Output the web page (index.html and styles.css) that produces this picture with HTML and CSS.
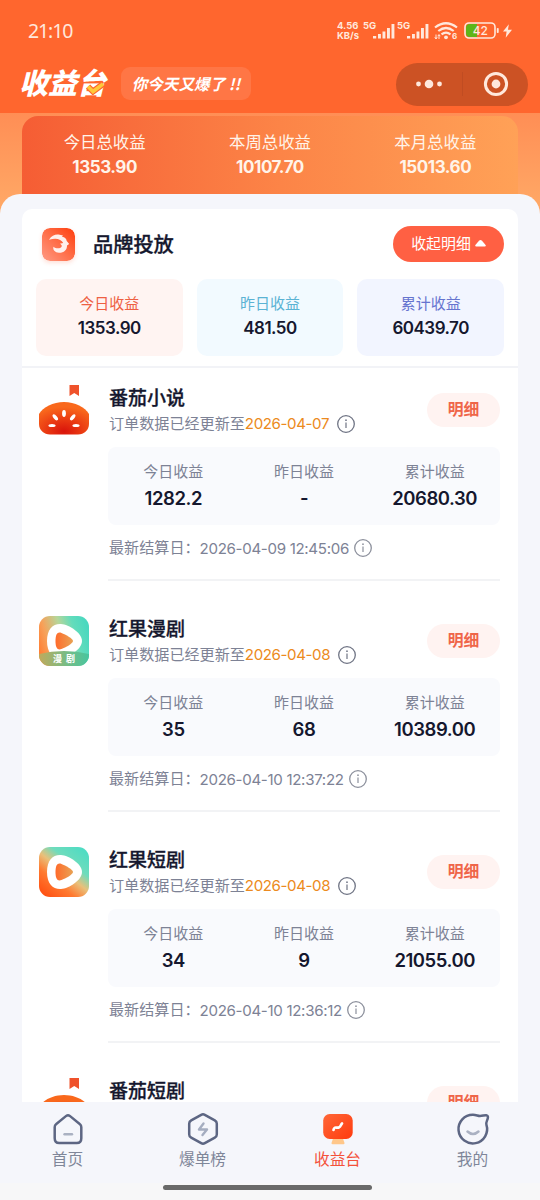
FILE: index.html
```html
<!DOCTYPE html>
<html lang="zh-CN">
<head>
<meta charset="utf-8">
<title>收益台</title>
<link rel="stylesheet" href="styles.css">
</head>
<body>
<svg class="defs" width="0" height="0" aria-hidden="true">
  <defs>
    <linearGradient id="fruit" x1=".1" y1="1" x2=".9" y2="0">
      <stop offset="0" stop-color="#ff4d10"/><stop offset=".3" stop-color="#ff7a30"/><stop offset=".5" stop-color="#e9c07a"/><stop offset=".68" stop-color="#6fdcbc"/><stop offset="1" stop-color="#4bdcc4"/>
    </linearGradient>
    <linearGradient id="comic" x1="0" y1=".65" x2="1" y2=".35">
      <stop offset="0" stop-color="#ff8136"/><stop offset=".2" stop-color="#f7a159"/><stop offset=".5" stop-color="#b6d69a"/><stop offset=".75" stop-color="#63dcbb"/><stop offset="1" stop-color="#4ad8bf"/>
    </linearGradient>
    <linearGradient id="play" x1="0" y1="0" x2="1" y2="0">
      <stop offset="0" stop-color="#ff6b2b"/><stop offset="1" stop-color="#e8a254"/>
    </linearGradient>
    <linearGradient id="band" x1="0" y1="0" x2="1" y2="0">
      <stop offset="0" stop-color="#bfaa5c"/><stop offset=".5" stop-color="#7dbb82"/><stop offset="1" stop-color="#48c59f"/>
    </linearGradient>
    <radialGradient id="tomato" cx=".5" cy=".9" r=".75">
      <stop offset="0" stop-color="#d9140b"/><stop offset=".45" stop-color="#e93812"/><stop offset="1" stop-color="#f9681c"/>
    </radialGradient>
    <linearGradient id="brand" x1="0" y1="1" x2="1" y2="0">
      <stop offset="0" stop-color="#ff9a84"/><stop offset=".55" stop-color="#ff6a43"/><stop offset="1" stop-color="#ff3d0c"/>
    </linearGradient>
    <linearGradient id="desk" x1="0" y1="0" x2="1" y2="1">
      <stop offset="0" stop-color="#ff6738"/><stop offset="1" stop-color="#ff3b0e"/>
    </linearGradient>
    <clipPath id="tile"><rect width="50" height="50" rx="11"/></clipPath>
    <symbol id="i-tomato" viewBox="0 0 50 50">
      <path d="M30.500 0h9.500v11l-4.750-3-4.750 3z" fill="#ef522b"/>
      <path d="M0 29C4 22 14 17 25 17s21 5 25 12v10c0 6-5 10.500-11 10.500H11C5 49.500 0 45 0 39z" fill="url(#tomato)"/>
      <g fill="#fff"><ellipse cx="25" cy="28.500" rx="1.900" ry="3.400"/><ellipse cx="16.300" cy="32.300" rx="1.800" ry="3.600" transform="rotate(-40 16.300 32.300)"/><ellipse cx="33.700" cy="32.300" rx="1.800" ry="3.600" transform="rotate(40 33.700 32.300)"/><ellipse cx="13" cy="40.500" rx="3.600" ry="1.600"/><ellipse cx="37" cy="40.500" rx="3.600" ry="1.600"/></g>
    </symbol>
    <symbol id="i-fruit" viewBox="0 0 50 50">
      <rect width="50" height="50" rx="11" fill="url(#fruit)"/>
      <path d="M8 25C8 13 14 7.500 22 8c8 .5 21 9 21 17s-13 16.500-21 17C14 42.500 8 37 8 25z" fill="#fff"/>
      <path d="M16.500 25c0-7 2-9.500 6-8 4 1.500 11.500 5.500 11.500 8s-7.500 6.500-11.500 8c-4 1.500-6-1-6-8z" fill="url(#play)"/>
    </symbol>
    <symbol id="i-comic" viewBox="0 0 50 50">
      <g clip-path="url(#tile)">
        <rect width="50" height="50" fill="url(#comic)"/>
        <path d="M8 25C8 13 14 7.500 22 8c8 .5 21 9 21 17s-13 16.500-21 17C14 42.500 8 37 8 25z" fill="#fff"/>
        <path d="M16.500 25c0-7 2-9.500 6-8 4 1.500 11.500 5.500 11.500 8s-7.500 6.500-11.500 8c-4 1.500-6-1-6-8z" fill="url(#play)"/>
        <path d="M0 38q25-6 50 0v12H0z" fill="url(#band)"/>
      </g>
    </symbol>
    <symbol id="i-info" viewBox="0 0 18 18">
      <circle cx="9" cy="9" r="8.300" fill="none" stroke="currentColor" stroke-width="1.300"/>
      <path d="M9 7.500v5.500" stroke="currentColor" stroke-width="1.200"/><circle cx="9" cy="5.200" r=".85" fill="currentColor"/>
    </symbol>
    <symbol id="i-signal" viewBox="0 0 23 15">
      <path d="M1 12h3.200v2.500H1zM6 10h2.900v4.500H6zM10.500 7.500h2.900v7h-2.900zM15 4h2.900v10.500H15zM19.500 0h2.900v14.500h-2.900z" fill="currentColor"/>
    </symbol>
  </defs>
</svg>
<main class="screen">
  <header class="header">
    <div class="status">
      <span class="clock">21:10</span>
      <div class="indicators">
        <div class="speed"><span>4.56</span><span>KB/s</span></div>
        <span class="cell"><b>5G</b><svg width="23" height="15"><use href="#i-signal"/></svg></span>
        <span class="cell"><b>5G</b><svg width="23" height="15"><use href="#i-signal"/></svg></span>
        <svg class="wifi" width="24" height="18" viewBox="0 0 24 18">
          <g fill="none" stroke="currentColor" stroke-width="2.200"><path d="M1 5.500q11-8.500 22 0"/><path d="M4.300 9q7.700-6 15.400 0"/><path d="M7.500 12.400q4.500-3.600 9 0"/></g>
          <circle cx="12" cy="15.300" r="1.900" fill="currentColor"/><path d="M2 12.500v4M.8 15.200 2 17l1.200-1.800M5 17v-4M3.800 14.200 5 12.500l1.200 1.700" stroke="currentColor" fill="none"/>
          <text x="18" y="17.300" class="wifi-gen">6</text>
        </svg>
        <svg class="battery" width="36" height="17" viewBox="0 0 36 17">
          <path d="M6 2h7v13H6a4 4 0 0 1-4-4V6a4 4 0 0 1 4-4z" fill="#5eb519"/>
          <rect x="1" y="1" width="30" height="15" rx="4" fill="none" stroke="currentColor" stroke-width="1.600"/>
          <rect x="32.800" y="6" width="1.900" height="5" rx=".8" fill="currentColor"/>
          <text x="16.300" y="12.800" text-anchor="middle" class="battery-num">42</text>
        </svg>
        <svg class="bolt" width="9" height="14" viewBox="0 0 10 15"><path d="M6.500 0 0 8h4L3 15l7-9H5.500z" fill="currentColor"/></svg>
      </div>
    </div>
    <div class="titlebar">
      <h1 class="logo">收益台<svg class="check" width="19" height="14" viewBox="0 0 19 14"><path d="m2 5.500 5 5L17 3" fill="none" stroke="#ff662e" stroke-width="6"/><path d="m2 5.500 5 5L17 3" fill="none" stroke="#ffc93a" stroke-width="3.600"/></svg></h1>
      <span class="slogan">你今天又爆了 !!</span>
      <div class="capsule">
        <svg width="28" height="12" viewBox="0 0 28 12"><g fill="currentColor"><circle cx="3.500" cy="6" r="2.400"/><circle cx="14" cy="6" r="4.300"/><circle cx="24.500" cy="6" r="2.400"/></g></svg>
        <i></i>
        <svg width="26" height="26" viewBox="0 0 26 26"><circle cx="13" cy="13" r="10.600" fill="none" stroke="currentColor" stroke-width="3"/><circle cx="13" cy="13" r="4.400" fill="currentColor"/></svg>
      </div>
    </div>
  </header>

  <section class="hero">
    <div class="totals">
      <div><span>今日总收益</span><b>1353.90</b></div>
      <div><span>本周总收益</span><b>10107.70</b></div>
      <div><span>本月总收益</span><b>15013.60</b></div>
    </div>
  </section>

  <section class="sheet">
    <div class="card">
      <div class="card-head">
        <svg class="brand" width="33" height="33" viewBox="0 0 33 33"><rect width="33" height="33" rx="8" fill="url(#brand)"/><path d="M7 11.800C9.500 7.500 13 6.200 16.500 6.500l4.500 1-1 1.300c3 .5 4.500 2 4.700 4.200l2.500 3-2.200 1.500c.3 4.500-3.500 7.500-8 7.300-4-.2-6.500-3-5.500-6 1.800 1.700 5 2 7 1 2.300-1.300 1.200-3.500-.8-4l3.500-.8c-2-3.800-7-5.700-14.200-3.200z" fill="#fff" opacity=".9"/></svg>
        <h2>品牌投放</h2>
        <button class="collapse">收起明细<svg width="11" height="7" viewBox="0 0 11 7"><path d="M5.500 0Q6.300 0 7 .7L10.600 5q.7 1.500-.8 1.500H1.200Q-.3 6.500.4 5L4 .7Q4.700 0 5.500 0z" fill="#fff"/></svg></button>
      </div>
      <div class="tiles">
        <div class="tile red"><span>今日收益</span><b>1353.90</b></div>
        <div class="tile cyan"><span>昨日收益</span><b>481.50</b></div>
        <div class="tile blue"><span>累计收益</span><b>60439.70</b></div>
      </div>

      <article class="item">
        <svg class="app" width="50" height="50"><use href="#i-tomato"/></svg>
        <div class="body">
          <div class="top"><div><h3>番茄小说</h3><p class="update">订单数据已经更新至<em>2026-04-07</em><svg width="18" height="18"><use href="#i-info"/></svg></p></div><button class="detail">明细</button></div>
          <div class="stats"><div><span>今日收益</span><b>1282.2</b></div><div><span>昨日收益</span><b>-</b></div><div><span>累计收益</span><b>20680.30</b></div></div>
          <p class="settle">最新结算日：<time>2026-04-09 12:45:06</time><svg width="18" height="18"><use href="#i-info"/></svg></p>
        </div>
      </article>

      <article class="item">
        <div class="app"><svg width="50" height="50"><use href="#i-comic"/></svg><span class="app-label">漫 剧</span></div>
        <div class="body">
          <div class="top"><div><h3>红果漫剧</h3><p class="update">订单数据已经更新至<em>2026-04-08</em><svg width="18" height="18"><use href="#i-info"/></svg></p></div><button class="detail">明细</button></div>
          <div class="stats"><div><span>今日收益</span><b>35</b></div><div><span>昨日收益</span><b>68</b></div><div><span>累计收益</span><b>10389.00</b></div></div>
          <p class="settle">最新结算日：<time>2026-04-10 12:37:22</time><svg width="18" height="18"><use href="#i-info"/></svg></p>
        </div>
      </article>

      <article class="item">
        <svg class="app" width="50" height="50"><use href="#i-fruit"/></svg>
        <div class="body">
          <div class="top"><div><h3>红果短剧</h3><p class="update">订单数据已经更新至<em>2026-04-08</em><svg width="18" height="18"><use href="#i-info"/></svg></p></div><button class="detail">明细</button></div>
          <div class="stats"><div><span>今日收益</span><b>34</b></div><div><span>昨日收益</span><b>9</b></div><div><span>累计收益</span><b>21055.00</b></div></div>
          <p class="settle">最新结算日：<time>2026-04-10 12:36:12</time><svg width="18" height="18"><use href="#i-info"/></svg></p>
        </div>
      </article>

      <article class="item">
        <svg class="app" width="50" height="50"><use href="#i-tomato"/></svg>
        <div class="body">
          <div class="top"><div><h3>番茄短剧</h3></div><button class="detail">明细</button></div>
        </div>
      </article>
    </div>
  </section>

  <nav class="nav">
    <div class="tabs">
      <a><svg width="34" height="34" viewBox="0 0 34 34" fill="none"><path d="M5 12.200 15.200 3.900q1.800-1.300 3.600 0L29 12.200q1.300 1 1.300 3v11q0 4.800-4.500 4.800H8.200q-4.500 0-4.500-4.800v-11q0-2 1.300-3z" stroke="#5d6683" stroke-width="2.500"/><path d="M13.500 22.200h7.500" stroke="#aab1c2" stroke-width="2.400" stroke-linecap="round"/></svg><span>首页</span></a>
      <a><svg width="34" height="34" viewBox="0 0 34 34" fill="none"><path d="M15.200 2.800q1.800-1 3.600 0l10 5.500q2 1.100 2 3.200v11q0 2.100-2 3.200l-10 5.500q-1.800 1-3.600 0l-10-5.500q-2-1.100-2-3.200v-11q0-2.100 2-3.200z" stroke="#5d6683" stroke-width="2.500"/><path d="m17.500 11.500-4.500 6h8l-4.500 5.500" stroke="#a5adc0" stroke-width="2.400" stroke-linecap="round" stroke-linejoin="round"/></svg><span>爆单榜</span></a>
      <a class="active"><svg width="34" height="34" viewBox="0 0 34 34" fill="none"><path d="M12.500 25h9l2 6q.2 1.300-1.200 1.300H11.700q-1.400 0-1.200-1.300z" fill="#ffc78a"/><rect x="2.200" y="2" width="29.500" height="25" rx="6.500" fill="url(#desk)"/><path d="M12.500 18c1-4.500 3-1.500 5.300-2.500 2.200-1 2-3 3.200-4.100" stroke="#fff" stroke-width="2.700" stroke-linecap="round"/></svg><span>收益台</span></a>
      <a><svg width="34" height="34" viewBox="0 0 34 34" fill="none"><path d="M17 2.800C20 2.800 22 4 24 4c2.500 0 4.500-1 6.300-.8 1.700.2 1.900 1.800 1.400 3.500-.6 2-2 4-1.300 6A14.300 14.300 0 1 1 17 2.800z" stroke="#5d6683" stroke-width="2.500"/><path d="M11.500 19.500q5.500 5 11 0" stroke="#aab1c2" stroke-width="2.500" stroke-linecap="round"/></svg><span>我的</span></a>
    </div>
    <div class="gesture"><i></i></div>
  </nav>
</main>
</body>
</html>
```

FILE: styles.css
```css
* { box-sizing: border-box; }
body, h1, h2, h3, p { margin: 0; }
body {
  font-family: Inter, "Noto Sans CJK SC", sans-serif;
  color: #15172e;
}
svg { display: block; flex: none; }
.defs { position: absolute; }
button { border: 0; padding: 0; font-family: inherit; }
.screen {
  width: 540px;
  height: 1200px;
  overflow: hidden;
  display: flex;
  flex-direction: column;
  background: #f5f6fb;
}

/* header */
.header { height: 113px; flex: none; background: #ff662e; color: #ffe8dc; }
.status {
  height: 61px;
  display: flex;
  align-items: center;
  justify-content: space-between;
  padding: 0 28px;
}
.clock { font: 400 19.500px/24px "Noto Sans", sans-serif; letter-spacing: -1.1px; }
.indicators { display: flex; align-items: center; }
.speed { width: 25px; display: flex; flex-direction: column; font: 700 9.500px/9.500px Inter, sans-serif; white-space: nowrap; }
.cell { width: 34px; height: 17px; display: flex; align-items: flex-end; justify-content: flex-end; position: relative; }
.cell b { position: absolute; left: 1px; top: -1px; font: 700 9.500px/10px Inter, sans-serif; }
.cell svg { margin-right: 1px; }
.wifi { margin-left: 4px; }
.wifi-gen { font: 700 8px Inter, sans-serif; fill: currentColor; }
.battery { margin-left: 6px; }
.battery-num { font: 500 12px Inter, sans-serif; fill: currentColor; }
.bolt { margin-left: 3px; }
.titlebar { height: 44px; display: flex; align-items: center; padding: 0 12px 0 19px; }
.logo {
  position: relative;
  width: 88px;
  height: 40px;
  font: italic 900 29px/36px "Noto Sans CJK SC", sans-serif;
  color: #fff;
  white-space: nowrap;
}
.check { position: absolute; left: 67px; top: 18px; }
.slogan {
  width: 130px;
  height: 33px;
  margin-left: 14px;
  border-radius: 9px;
  background: #ff7645;
  color: #fff;
  text-align: center;
  font: italic 700 15.600px/32px "Noto Sans CJK SC", sans-serif;
  white-space: nowrap;
}
.capsule {
  width: 132px;
  height: 43px;
  margin-left: auto;
  margin-top: 2px;
  border-radius: 22px;
  background: #cc5224;
  display: flex;
  align-items: center;
  padding: 0 19px;
  justify-content: space-between;
}
.capsule i { width: 1px; height: 24px; background: #c04c22; margin-left: 6px; margin-right: 8px; }

/* totals banner */
.hero {
  height: 101px;
  flex: none;
  padding: 3px 22px 0;
  background: linear-gradient(#ff8e55, #ffa765 90px);
}
.totals {
  height: 98px;
  border-radius: 16px 16px 0 0;
  background: linear-gradient(90deg, #f55d34, #fc8447 52%, #ffa157);
  display: grid;
  grid-template-columns: repeat(3, 1fr);
  padding-top: 13px;
  color: #fff4ea;
  text-align: center;
}
.totals span, .totals b { display: block; }
.totals span { font-size: 16.400px; line-height: 26px; }
.totals b { font-size: 17px; line-height: 24px; font-weight: 700; letter-spacing: -0.45px; }

/* content sheet */
.sheet {
  flex: 1;
  min-height: 0;
  overflow: hidden;
  margin-top: -20px;
  padding: 15px 22px 0;
  border-radius: 20px 20px 0 0;
  background: #f5f6fb;
}
.card { background: #fff; border-radius: 10px; }
.card-head { height: 70px; display: flex; align-items: center; padding: 0 14px 0 20px; }
.brand { border-radius: 8px; box-shadow: 0 2px 4px #ff6a4333; }
.card-head h2 { flex: 1; margin: 2px 0 0 18px; font-size: 20.200px; font-weight: 500; line-height: 28px; -webkit-text-stroke: 0.3px currentColor; }
.collapse {
  width: 111px;
  height: 36px;
  border-radius: 18px;
  background: #ff6043;
  color: #fff;
  font-size: 14.900px;
  line-height: 34px;
  padding-bottom: 1px;
  display: flex;
  align-items: center;
  justify-content: center;
  gap: 4px;
}
.tiles {
  height: 89px;
  padding: 0 14px 11px;
  display: grid;
  grid-template-columns: repeat(3, 1fr);
  gap: 14px;
  border-bottom: 2px solid #f2f3f7;
  text-align: center;
}
.tile { height: 77px; border-radius: 10px; padding-top: 13px; }
.tile span, .tile b { display: block; line-height: 24px; }
.tile span { font-size: 15px; }
.tile b { font-size: 17px; font-weight: 600; letter-spacing: -0.5px; }
.red { background: #fff4f2; color: #ee6043; }
.cyan { background: #f2faff; color: #5bb3d4; }
.blue { background: #f2f5ff; color: #6674cf; }
.tile b { color: #15172e; }

/* app entries */
.item { height: 231px; display: flex; padding: 17px 18px 0 17px; }
.app { flex: none; width: 50px; height: 50px; position: relative; }
.app-label {
  position: absolute;
  left: 0;
  bottom: 1px;
  width: 100%;
  text-align: center;
  color: #fff;
  font-size: 9px;
  font-weight: 700;
  line-height: 12px;
  white-space: pre;
  word-spacing: 2px;
}
.body { width: 392px; margin-left: 19px; }
.top { height: 62px; display: flex; justify-content: space-between; }
.top h3 { font-size: 19px; line-height: 26px; font-weight: 500; margin: 1px 0 0 1px; -webkit-text-stroke: 0.3px currentColor; }
.update, .settle { display: flex; align-items: center; color: #7d8295; font-size: 15.100px; white-space: nowrap; padding-left: 1px; }
.update { line-height: 26px; margin-top: -1px; }
.update em { font-style: normal; color: #ec8a20; letter-spacing: -0.4px; }
.update svg { margin-left: 8px; margin-top: -1px; color: #6f7484; }
.detail {
  width: 73px;
  height: 34px;
  margin-top: 8px;
  padding-bottom: 3px;
  border-radius: 17px;
  background: #fff3f1;
  color: #ef6549;
  font-size: 15.800px;
  font-weight: 700;
}
.stats {
  height: 78px;
  border-radius: 8px;
  background: #f9fafd;
  display: grid;
  grid-template-columns: repeat(3, 1fr);
  text-align: center;
  padding-top: 12px;
}
.stats span, .stats b { display: block; }
.stats span { font-size: 15px; line-height: 26px; color: #7d8295; }
.stats b { font-size: 18.500px; line-height: 26px; font-weight: 600; letter-spacing: -0.45px; }
.settle { height: 56px; padding-bottom: 8px; border-bottom: 2px solid #f2f3f5; line-height: 26px; }
.settle time { letter-spacing: -0.32px; margin-top: 1px; }
.settle svg { margin-left: 5px; color: #8c909c; }

/* bottom navigation */
.nav { height: 98px; flex: none; background: #f5f6fb; }
.tabs { height: 81px; padding-top: 10px; display: grid; grid-template-columns: repeat(4, 1fr); }
.tabs a { display: flex; flex-direction: column; align-items: center; color: #7f8699; font-size: 15.700px; line-height: 28px; }
.tabs .active { color: #f4513a; }
.gesture { height: 17px; display: flex; align-items: flex-start; padding: 2px 0 0 163px; background: #f7f7f8; }
.gesture i { width: 209px; height: 5px; border-radius: 3px; background: #696969; }
```
